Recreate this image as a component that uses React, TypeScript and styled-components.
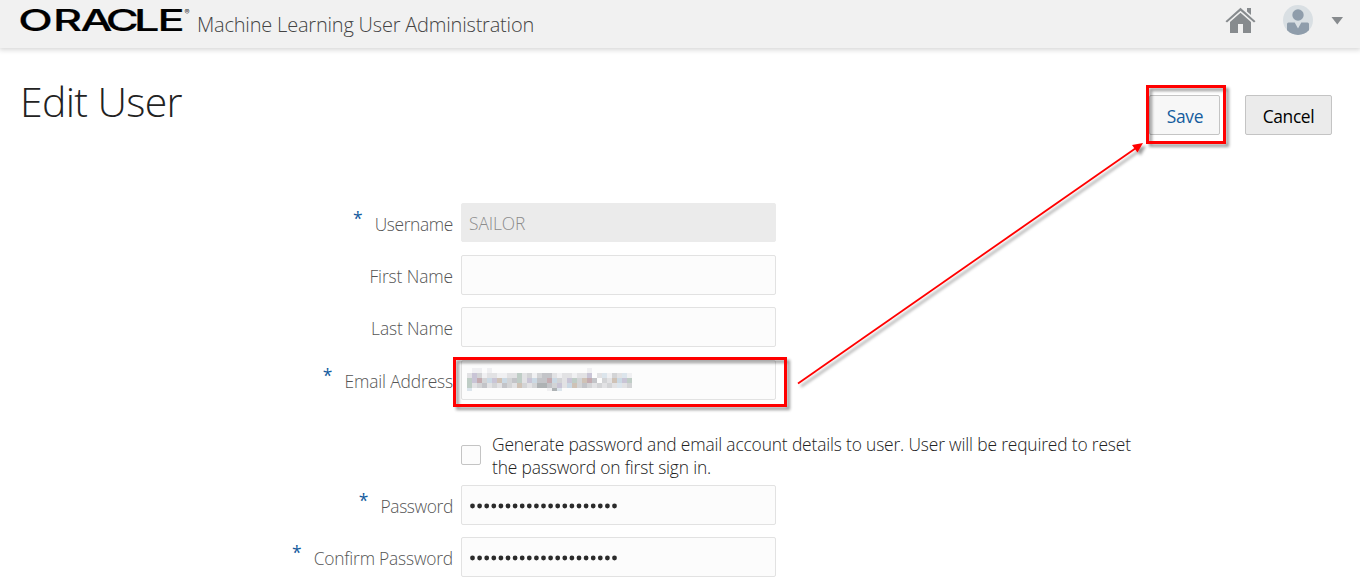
import React from "react";
import styled, { createGlobalStyle } from "styled-components";

const Global = createGlobalStyle`
  *, *::before, *::after { box-sizing: border-box; }
  body { margin: 0; background: #fff; font-family: "Open Sans", "Noto Sans", sans-serif; font-weight: 360; color: #333; }
`;

const Page = styled.div`
  position: relative;
  width: 1360px;
  height: 582px;
  overflow: hidden;
  background: #fff;
`;

const Header = styled.header`
  display: flex;
  align-items: flex-start;
  height: 48px;
  padding-left: 16px;
  background: #f1f1f1;
  box-shadow: 0 1px 5px 1px rgba(0, 0, 0, 0.16);
`;

const Logo = styled.svg`
  flex: none;
  display: block;
  overflow: visible;
`;

const AppName = styled.span`
  font-size: 20px;
  line-height: 49px;
  letter-spacing: -0.2px;
  color: #444;
  white-space: nowrap;
`;

const HeaderTools = styled.div`
  display: flex;
  align-items: flex-start;
  margin-left: auto;
`;

const TitleBar = styled.div`
  display: flex;
  justify-content: space-between;
  height: 155px;
  padding: 26px 28px 0 20px;
`;

const Title = styled.h1`
  margin: 0;
  font-size: 41px;
  line-height: 54px;
  font-weight: 310;
  letter-spacing: -0.65px;
  color: #222;
`;

const Actions = styled.div`
  display: flex;
  gap: 25px;
  padding-top: 21px;
`;

const Button = styled.button<{ $primary?: boolean }>`
  width: ${(p) => (p.$primary ? 71 : 87)}px;
  height: 40px;
  padding: ${(p) => (p.$primary ? "1px 0 0 1px" : "1px 0 0")};
  border: 1px solid #c4c4c4;
  border-radius: 2px;
  background: ${(p) => (p.$primary ? "#f7f7f7" : "#ebebeb")};
  color: ${(p) => (p.$primary ? "#145c9e" : "#000")};
  font: 370 17.4px "Open Sans", "Noto Sans", sans-serif;
  letter-spacing: -0.35px;
`;

const Form = styled.form`
  display: flex;
  flex-direction: column;
`;

const Row = styled.div<{ $height: number }>`
  display: flex;
  align-items: flex-start;
  height: ${(p) => p.$height}px;
`;

const Label = styled.label`
  display: flex;
  justify-content: flex-end;
  width: 453px;
  margin-right: 8px;
  font-size: 17.4px;
  line-height: 43px;
  color: #555;
  white-space: nowrap;
`;

const Required = styled.span`
  margin-right: 12px;
  font-size: 17.5px;
  line-height: 31px;
  font-weight: 400;
  color: #145c9e;
`;

const LabelText = styled.span<{ $spacing: number }>`
  letter-spacing: ${(p) => p.$spacing}px;
`;

const Field = styled.div<{ $disabled?: boolean }>`
  display: flex;
  align-items: center;
  width: 315px;
  height: ${(p) => (p.$disabled ? 39 : 40)}px;
  padding-left: 7px;
  border: 1px solid ${(p) => (p.$disabled ? "#ebebeb" : "#e2e2e2")};
  border-radius: 2px;
  background: ${(p) => (p.$disabled ? "#ebebeb" : "#fcfcfc")};
  color: #8c8c8c;
  font-size: 17.4px;
  letter-spacing: -0.1px;
`;

const DotRow = styled.svg`
  display: block;
  margin-top: 2px;
`;

const Mask = styled.svg`
  display: block;
  margin: 0 0 1px -2px;
`;

const CheckRow = styled.div`
  display: flex;
  align-items: flex-start;
  height: 73px;
  padding: 20px 0 0 461px;
`;

const Checkbox = styled.span`
  width: 20px;
  height: 20px;
  margin: 13px 11px 0 0;
  border: 1px solid #c4c4c4;
  border-radius: 2px;
  background: #fcfcfc;
`;

const CheckText = styled.span`
  padding-top: 1px;
  font-size: 17.4px;
  line-height: 23px;
  letter-spacing: -0.16px;
  color: #222;
  white-space: nowrap;
`;

const Annotations = styled.svg`
  position: absolute;
  inset: 0;
  pointer-events: none;
`;

const maskTones: Record<string, string> = {
  a: "#f0f0f2",
  b: "#e2e2e4",
  c: "#d3d4d6",
  d: "#c3c4c8",
  e: "#aeb2b4",
  p: "#c9c5d6",
  r: "#c4abb0",
  l: "#cbd9e4",
  g: "#bfcdc6",
  t: "#cfc2b6",
  w: "#dce5ec",
};

const maskRows = [
  ".aa.a...................a........",
  "bpcabbaabbgbcacddbabbabbp.bwacbwa",
  "gprclptlcdgbplddrlcbpgctrd.cbtlpg",
  "gbcdbcbdcbtcbceedcpbltcdcbcbcbwbc",
  "w...............aew..............",
];

function OracleLogo() {
  return (
    <Logo width="181" height="46" viewBox="-4 0 181 46">
      <text
        transform="scale(1.5 1)"
        x="-1.1 22 40.3 57.2 76 91.6"
        y="31"
        fontFamily="Inter, sans-serif"
        fontSize="30"
        fontWeight="500"
        stroke="#000"
        strokeWidth="0.2"
      >
        ORACLE
      </text>
      <text x="164.5" y="15" fontFamily="Inter, sans-serif" fontSize="7.5">®</text>
    </Logo>
  );
}

function HeaderIcons() {
  return (
    <svg width="150" height="48" viewBox="1210 0 150 48">
      <g fill="#878b8e">
        <path d="M1240.5 7.8 L1255.5 21.3 L1254 22.6 L1240.5 10.8 L1227 22.6 L1225.5 21.3 Z" />
        <path d="M1247 8h4v7l-4-3.6z" />
        <path d="M1240.5 12.8 L1251 22v11h-8v-9h-5v9h-8V22z" />
      </g>
      <circle cx="1298" cy="20" r="15" fill="#d9dfe3" />
      <clipPath id="avatar"><circle cx="1298" cy="20" r="15" /></clipPath>
      <g fill="#8f9dab" clipPath="url(#avatar)">
        <circle cx="1298" cy="15" r="5.7" />
        <path d="M1287 24q0-1.5 1.5-1.5h6.2l3.3 6 3.3-6h6.2q1.5 0 1.5 1.5v12h-22z" />
      </g>
      <path d="M1331.5 17h11.5l-5.7 7.5z" fill="#878b8e" />
    </svg>
  );
}

const PasswordDots = () => (
  <DotRow width="152" height="6" fill="#2b2b2b">
    {Array.from({ length: 21 }, (_, i) => (
      <circle key={i} cx={3.5 + i * 7.1} cy="3" r="2.4" />
    ))}
  </DotRow>
);

const MaskedEmail = () => (
  <Mask width="165" height="23" viewBox="0 0 165 23" shapeRendering="crispEdges">
    {maskRows.flatMap((row, y) =>
      row.split("").map((tone, x) =>
        maskTones[tone] ? (
          <rect key={`${x}-${y}`} x={x * 5} y={y * 5} width="5" height="5" fill={maskTones[tone]} />
        ) : null
      )
    )}
  </Mask>
);

interface FormRowProps {
  label: string;
  height: number;
  spacing: number;
  required?: boolean;
  disabled?: boolean;
  children?: React.ReactNode;
}

function FormRow({ label, height, spacing, required, disabled, children }: FormRowProps) {
  return (
    <Row $height={height}>
      <Label>
        {required && <Required>*</Required>}
        <LabelText $spacing={spacing}>{label}</LabelText>
      </Label>
      <Field $disabled={disabled}>{children}</Field>
    </Row>
  );
}

export default function App() {
  return (
    <>
      <Global />
      <Page>
        <Header>
          <OracleLogo />
          <AppName>Machine Learning User Administration</AppName>
          <HeaderTools><HeaderIcons /></HeaderTools>
        </Header>
        <TitleBar>
          <Title>Edit User</Title>
          <Actions>
            <Button $primary>Save</Button>
            <Button>Cancel</Button>
          </Actions>
        </TitleBar>
        <Form>
          <FormRow label="Username" height={52} spacing={-0.38} required disabled>SAILOR</FormRow>
          <FormRow label="First Name" height={52} spacing={-0.1} />
          <FormRow label="Last Name" height={53} spacing={-0.15} />
          <FormRow label="Email Address" height={52} spacing={-0.13} required><MaskedEmail /></FormRow>
          <CheckRow>
            <Checkbox />
            <CheckText>
              Generate password and email account details to user. User will be required to reset
              <br />
              the password on first sign in.
            </CheckText>
          </CheckRow>
          <FormRow label="Password" height={52} spacing={-0.37} required><PasswordDots /></FormRow>
          <FormRow label="Confirm Password" height={52} spacing={-0.2} required><PasswordDots /></FormRow>
        </Form>
        <Annotations width="1360" height="582">
          <defs>
            <filter id="shade" x="-10%" y="-20%" width="125%" height="150%">
              <feDropShadow dx="3" dy="3" stdDeviation="1.5" floodColor="#000" floodOpacity="0.4" />
            </filter>
          </defs>
          <g filter="url(#shade)" stroke="#f00" fill="none">
            <rect x="1147.5" y="86.5" width="77" height="56" strokeWidth="3" />
            <rect x="454.5" y="358.5" width="331" height="47" strokeWidth="3" />
            <path d="M798 383.5L1136 148" strokeWidth="1.8" />
            <path d="M1143 143l-5.5 9.5-5.5-7.5z" fill="#f00" stroke="none" />
          </g>
        </Annotations>
      </Page>
    </>
  );
}
